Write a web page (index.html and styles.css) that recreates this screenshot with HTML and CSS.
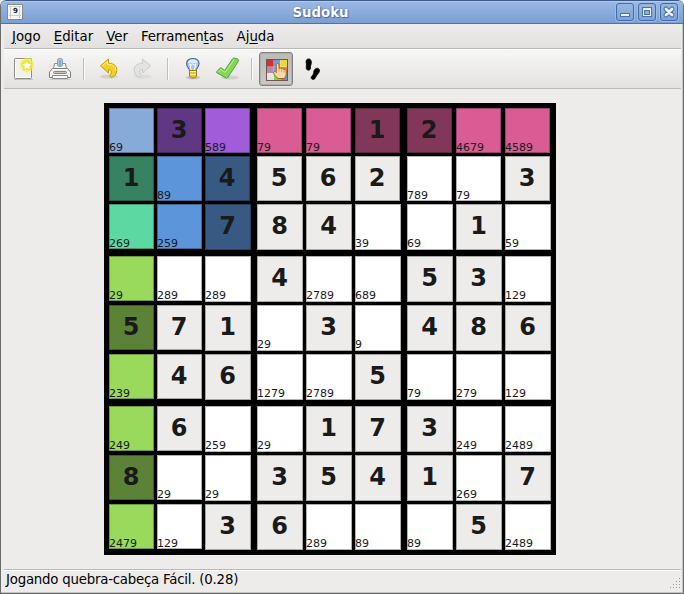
FILE: index.html
```html
<!DOCTYPE html>
<html lang="pt-BR">
<head>
<meta charset="utf-8">
<title>Sudoku</title>
<link rel="stylesheet" href="styles.css">
</head>
<body>
<div class="window">
  <header class="titlebar">
    <svg class="app-icon" width="16" height="16" viewBox="0 0 16 16">
      <rect x=".5" y=".5" width="15" height="15" fill="#f7f7f5" stroke="#888a85"/>
      <path d="M3.500 2v12M12.500 2v12M2 11.500h12M2 2.500h12" stroke="#cfcfcb" fill="none"/>
      <text x="6" y="9" class="app-digit">9</text>
    </svg>
    <h1>Sudoku</h1>
    <div class="controls">
      <button><svg width="18" height="18"><rect x="4.500" y="10.500" width="9" height="3" fill="#eef3fb" stroke="#4a73ab"/></svg></button>
      <button><svg width="18" height="18"><rect x="4.500" y="4.500" width="9" height="9" fill="#eef3fb" stroke="#4a73ab"/><rect x="6.500" y="7.500" width="5" height="4" fill="#8fb0de" stroke="#4a73ab"/></svg></button>
      <button><svg width="18" height="18"><path d="M6 6l6 6M12 6l-6 6" stroke="#4a73ab" stroke-width="5" stroke-linecap="round"/><path d="M6 6l6 6M12 6l-6 6" stroke="#eef3fb" stroke-width="2.800" stroke-linecap="round"/></svg></button>
    </div>
  </header>
  <nav class="menubar">
    <span><u>J</u>ogo</span><span><u>E</u>ditar</span><span><u>V</u>er</span><span class="tight">Ferramen<u>t</u>as</span><span>Aj<u>u</u>da</span>
  </nav>
  <div class="toolbar">
    <svg class="new" width="24" height="24" viewBox="0 0 24 24">
      <defs><radialGradient id="glow"><stop offset=".5" stop-color="#f8e81a"/><stop offset=".75" stop-color="#fbee45" stop-opacity=".75"/><stop offset="1" stop-color="#fcf04a" stop-opacity="0"/></radialGradient></defs>
      <path d="M2 22.500h19" stroke="#000" opacity=".15"/>
      <rect x="2.500" y="1.500" width="17" height="20" rx="1" fill="#f1f1ef" stroke="#8a8c87"/>
      <rect x="3.500" y="2.500" width="15" height="18" fill="none" stroke="#fff"/>
      <circle cx="15" cy="8" r="8" fill="url(#glow)"/>
      <path d="M15 2.800l1.600 3.400 3.900.5-2.800 2.600.7 3.900-3.400-1.900-3.400 1.900.7-3.900-2.800-2.600 3.900-.5z" fill="#fffffa" stroke="#ead80c" stroke-width=".7"/>
    </svg>
    <svg class="print" width="24" height="24" viewBox="0 0 24 24">
      <path d="M2 22.500h20" stroke="#000" opacity=".12"/>
      <path d="M6.500 6.500h11l1 6h-13z" fill="#fafafa" stroke="#8b8d88"/>
      <rect x="9.500" y="1.500" width="5" height="8" rx="2" fill="#a9c5e8" stroke="#7d9cc5"/>
      <path d="M12 3v6" stroke="#6d8fbb"/>
      <path d="M4.500 11.500h15l3 3.500v5.500h-21V15z" fill="#f0f0ee" stroke="#7f817c"/>
      <path d="M5 12.500h14M2.500 15.500h19" stroke="#fff"/>
      <rect x="5.500" y="14.500" width="13" height="2" rx="1" fill="#c8c8c4" stroke="#858782"/>
      <path d="M4.500 18.500h15v3h-15z" fill="#fafafa" stroke="#8b8d88"/>
    </svg>
    <i class="separator"></i>
    <svg class="undo" width="24" height="24" viewBox="0 0 24 24">
      <ellipse cx="12" cy="19.500" rx="9" ry="2" fill="#000" opacity=".1"/>
      <path d="M3.500 8.800L11.500 2v4.200c6 .2 8.500 3.300 8.300 7.300-.2 4-2.300 6-6 6.800l-1.300-1.600c2.500-2.200 3-6-1-6.200V16z" fill="#f5d021" stroke="#c4a000" stroke-linejoin="round"/>
      <path d="M5.200 8.800l5.300-4.500v3c5.500 0 8.300 2 8.300 6.200" fill="none" stroke="#fdf0a0"/>
    </svg>
    <svg class="redo" width="24" height="24" viewBox="0 0 24 24">
      <ellipse cx="12" cy="19.500" rx="9" ry="2" fill="#000" opacity=".05"/>
      <path d="M19.500 8.800L11.500 2v4.200c-6 .2-8.500 3.300-8.300 7.300.2 4 2.300 6 6 6.800l1.300-1.600c-2.500-2.200-3-6 1-6.200V16z" fill="#e3e3e0" stroke="#cacbc7" stroke-linejoin="round"/>
    </svg>
    <i class="separator wide"></i>
    <svg class="hint" width="24" height="24" viewBox="0 0 24 24">
      <ellipse cx="12" cy="20.500" rx="7" ry="1.800" fill="#000" opacity=".16"/>
      <path d="M8.500 13.500c0-2-2.900-3-2.900-7 0-3.300 2.700-5 6.200-5s6.200 1.700 6.200 5c0 4-2.900 5-2.900 7z" fill="#a6c3ec" stroke="#4a6ca8" stroke-width="1.200"/>
      <path d="M7 6c0-2.300 2-3.500 4.800-3.500S16.600 3.700 16.600 6z" fill="#e0ebf9"/>
      <path d="M10.300 13L8.600 6.800l1.700 1.400 1.500-1.400 1.500 1.400L15 6.800 13.300 13" fill="none" stroke="#fff"/>
      <path d="M8.500 13.500h7v5.500l-2 2h-3l-2-2z" fill="#e9c22f" stroke="#9b7b14"/>
      <path d="M9 14.500h6M9 17.500h6" stroke="#fff0a0"/>
    </svg>
    <svg class="check" width="24" height="24" viewBox="0 0 24 24">
      <ellipse cx="14" cy="20.500" rx="9" ry="2" fill="#000" opacity=".1"/>
      <path d="M.7 14.800l3.200-3.600c.5-.6 1-.6 1.600-.1L8.600 13.500 16.300 2.200c.6-1 1.500-1.300 2.500-1l2.800.8c1 .4 1.300 1.300.8 2.200L11.800 20.500c-.5.8-1.200.9-1.900.3L.8 15.800z" fill="#83d955" stroke="#58a038" stroke-linejoin="round"/>
      <path d="M2.500 14.800l2.200-2.400 4.400 3L18 2.700" fill="none" stroke="#bff09a"/>
    </svg>
    <i class="separator narrow"></i>
    <span class="toggle">
      <svg width="24" height="24" viewBox="0 0 24 24">
        <path d="M1 1h8v8H1z" fill="#d83030"/><path d="M9 1h6v8H9z" fill="#6d9edb"/><path d="M15 1h8v8h-8z" fill="#f0d830"/>
        <path d="M1 9h8v6H1z" fill="#b68bb0"/><path d="M9 9h6v6H9z" fill="#78a5dc"/><path d="M15 9h8v6h-8z" fill="#f08030"/>
        <path d="M1 15h8v8H1z" fill="#e4e4e0"/><path d="M9 15h6v8H9z" fill="#83d632"/><path d="M15 15h8v8h-8z" fill="#5f95d8"/>
        <path d="M8.500 2v20M15.500 2v20M2 8.500h20M2 15.500h20" stroke="#eee" opacity=".35"/>
        <rect x="1.500" y="1.500" width="21" height="21" fill="none" stroke="#6c5850"/>
        <path d="M11.300 13.500V7c0-2 2.700-2 2.700 0v3.500c.8-.8 2.400-.5 2.600.4.800-.6 2.200 0 2.400.8.900-.4 2.200.2 2.200 1.200v3.500c0 1.800-1.500 2.400-1.700 4.100h-7c-.2-2-3.900-2.900-3.900-5.800 0-1.700 2-1.500 2.700-.2z" fill="#fbd9a5" stroke="#9c5f20" stroke-width=".9"/>
        <path d="M14 11v2.500M16.600 11.500v2.200M19 12.500v2" stroke="#a06420" stroke-width=".5"/>
      </svg>
    </span>
    <svg class="steps" width="24" height="24" viewBox="0 0 24 24">
      <path stroke="#000" stroke-width=".8" d="M6.500 2.200C9 1.200 10.600 3 10.300 6c-.2 2-.9 2.500-.9 5.500 0 2.300-3.900 2.300-4.100-.3-.1-2.200.3-2.700 0-4.700C4.900 4.500 5 2.700 6.500 2.200zM14 12.200c2-1.900 4.900-.9 4.400 1.900-.4 2-1.700 3.200-2.700 4.500-.8 1-.7 1.600-1.900 3.100-1.500 1.700-4.500.2-3.500-1.800.7-1.300 1.700-1.600 2.100-3 .5-1.800.2-3.600 1.600-4.700z"/>
    </svg>
  </div>
  <main>
    <div class="board" id="board"></div>
  </main>
  <footer class="statusbar">
    <span>Jogando quebra-cabeça Fácil. (0.28)</span>
    <svg class="grip" width="12" height="12"><path d="M10 1h1v1h-1zM7 4h1v1H7zM10 4h1v1h-1zM4 7h1v1H4zM7 7h1v1H7zM10 7h1v1h-1zM1 10h1v1H1zM4 10h1v1H4zM7 10h1v1H7zM10 10h1v1h-1z" fill="#999"/></svg>
  </footer>
</div>
<script src="board.js"></script>
</body>
</html>
```
FILE: styles.css
```css
* { box-sizing: border-box; }
body { margin: 0; background: #fff; font: 13.33px "DejaVu Sans", sans-serif; color: #000; }
.window {
  width: 684px; height: 594px; display: flex; flex-direction: column;
  background: #edeceb; border: solid #6b6b69; border-width: 0 1px 1px;
  border-radius: 6px 6px 0 0; overflow: hidden; box-shadow: inset -1px -1px #c4c3c1;
}
.titlebar {
  height: 24px; flex: none; display: flex; align-items: center; padding: 0 6px 0 7px; margin: 0 -1px;
  background: linear-gradient(#9ab8e5, #7b9fd1); border-top: 1px solid #3d5a87; border-bottom: 1px solid #4a73ab;
  box-shadow: inset 0 1px #b3caed; border-radius: 6px 6px 0 0;
}
.app-digit { font: bold 7px "DejaVu Sans", sans-serif; fill: #222; }
.titlebar h1 { flex: 1; margin: 0 0 0 2px; text-align: center; color: #fff; font: bold 13.33px "DejaVu Sans", sans-serif; text-shadow: 0 0 1px #345d96, 1px 1px 1px #47699c; }
.controls { display: flex; gap: 4px; }
.controls button { width: 18px; height: 18px; padding: 0; border: 1px solid #426ba3; border-radius: 3px; background: linear-gradient(#98b6e2, #7fa3d4); box-shadow: 0 0 0 1px #a0bce5; }
.controls svg { display: block; margin: -1px; }
.menubar { height: 24px; flex: none; display: flex; align-items: center; gap: 13px; margin: 0 2px 0 3px; padding-left: 8px; background: linear-gradient(#edeceb, #e2e1df); }
.menubar u { text-decoration-thickness: 1px; text-underline-offset: 2px; }
.menubar .tight { letter-spacing: -.13px; }
.toolbar { height: 41px; flex: none; display: flex; align-items: center; margin: 0 2px 0 3px; padding: 1px 0 0 8px; border-top: 1px solid #bcbbb9; border-bottom: 1px solid #bcbbb9; background: linear-gradient(#f7f7f5, #e3e2e0); box-shadow: inset 0 1px #fff; }
.toolbar svg { display: block; flex: none; }
.print { margin-left: 12px; }
.separator { width: 1px; height: 22px; background: #bfbebc; box-shadow: 1px 0 #fafafa; margin: 0 13px 0 11px; }
.separator.wide { margin: 0 13px 0 12px; }
.separator.narrow { margin: 0 7px 0 11px; }
.redo { margin-left: 10px; }
.check { margin-left: 11px; }
.toggle { width: 34px; height: 34px; padding: 2px 0 0 2px; display: grid; place-items: center; border: 1px solid #82817e; border-radius: 3px; background: linear-gradient(#bdbbb7, #cac8c5); box-shadow: inset 0 0 0 1px #afada9; }
.steps { margin-left: 8px; }
main { flex: 1; padding: 14px 0 0 103px; }
.board {
  width: 452px; height: 452px; padding: 5px; background: #000; display: grid;
  grid-template-columns: 48px 48px 52px 49px 49px 52px 49px 49px 46px;
  grid-template-rows: 48px 48px 52px 49px 49px 52px 49px 49px 46px;
}
.cell { width: 45px; height: 45px; background: #fff; border: 1px solid rgba(0,0,0,.3); color: #1a1a1a; display: flex; white-space: nowrap; }
.cell.large { width: 46px; height: 46px; }
.value { flex: 1; text-align: center; font: bold 24px/43px "DejaVu Sans", sans-serif; margin-right: 1px; }
.notes { align-self: flex-end; font: 11px/11px "DejaVu Sans", sans-serif; margin: 0 0 -1px -1px; }
.large .notes { margin-bottom: 0; }
.given { background: #edecea; }
.blue-light { background: #87abd9; }
.purple-dark { background: #5f3782; }
.purple { background: #a05cd9; }
.pink { background: #d95c95; }
.pink-dark { background: #823759; }
.green-dark { background: #378261; }
.blue { background: #5c95d9; }
.blue-dark { background: #375982; }
.mint { background: #5cd9a2; }
.lime { background: #99d95c; }
.lime-dark { background: #5c8237; }
.statusbar { height: 24px; flex: none; display: flex; align-items: center; justify-content: space-between; margin: 0 2px 0 3px; padding: 0 0 0 2px; letter-spacing: -.22px; border-top: 1px solid #bcbbb9; box-shadow: inset 0 1px #fff; }
.statusbar span { padding-bottom: 4px; }
.grip { align-self: flex-end; margin-bottom: 4px; }
```
FILE: board.js
```js
// "=" marks a filled value; everything else is a list of candidate notes.
const rows = [
  "69 =3 589 79 79 =1 =2 4679 4589",
  "=1 89 =4 =5 =6 =2 789 79 =3",
  "269 259 =7 =8 =4 39 69 =1 59",
  "29 289 289 =4 2789 689 =5 =3 129",
  "=5 =7 =1 29 =3 9 =4 =8 =6",
  "239 =4 =6 1279 2789 =5 79 279 129",
  "249 =6 259 29 =1 =7 =3 249 2489",
  "=8 29 29 =3 =5 =4 =1 269 =7",
  "2479 129 =3 =6 289 89 89 =5 2489"
];
const tints = {
  "0,0": "blue-light", "0,1": "purple-dark", "0,2": "purple", "0,3": "pink", "0,4": "pink",
  "0,5": "pink-dark", "0,6": "pink-dark", "0,7": "pink", "0,8": "pink",
  "1,0": "green-dark", "1,1": "blue", "1,2": "blue-dark",
  "2,0": "mint", "2,1": "blue", "2,2": "blue-dark",
  "3,0": "lime", "4,0": "lime-dark", "5,0": "lime", "6,0": "lime", "7,0": "lime-dark", "8,0": "lime"
};
const board = document.getElementById("board");
rows.forEach((row, r) => row.split(" ").forEach((item, c) => {
  const filled = item[0] === "=";
  const cell = document.createElement("div");
  cell.className = "cell " + (tints[r + "," + c] || (filled ? "given" : ""));
  if (r > 1 && c > 1) cell.classList.add("large");
  const text = document.createElement("span");
  text.className = filled ? "value" : "notes";
  text.textContent = item.replace("=", "");
  cell.append(text);
  board.append(cell);
}));
```
